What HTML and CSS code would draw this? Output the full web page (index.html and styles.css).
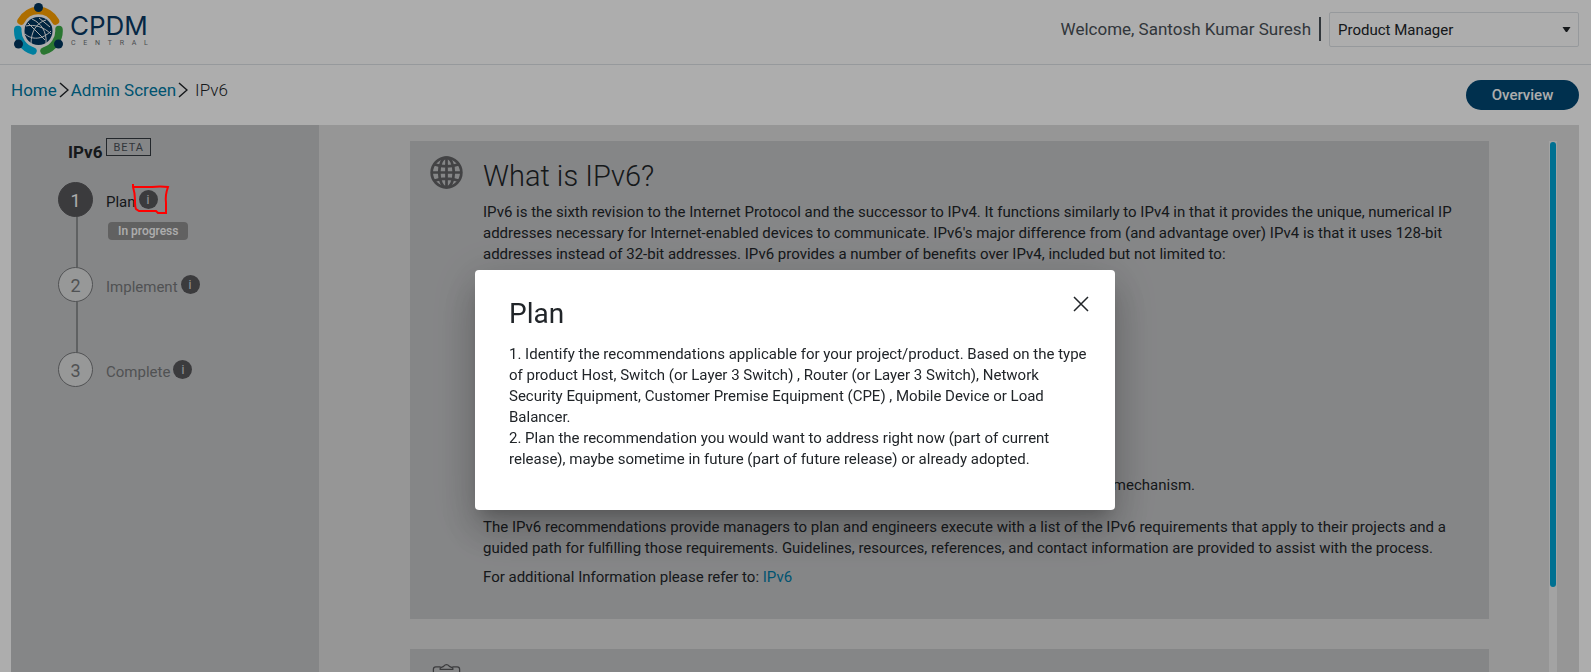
FILE: index.html
```html
<!DOCTYPE html>
<html lang="en">
<head>
<meta charset="utf-8">
<title>CPDM Central - IPv6</title>
<link rel="stylesheet" href="styles.css">
</head>
<body>
<div class="page">
  <header class="header">
    <div class="logo">
      <svg class="logo-mark" viewBox="0 0 52 54" aria-hidden="true">
        <g fill="none" stroke-width="7.500" stroke-linecap="round">
          <path d="M9 20A19.500 19.500 0 0 1 43.500 20" stroke="#ffa200"/>
          <path d="M5.800 28.500A21 21 0 0 0 21 50" stroke="#00bceb"/>
          <path d="M47 28.500A21 21 0 0 1 32 50" stroke="#3fae49"/>
        </g>
        <g fill="#00355f"><circle cx="26.500" cy="6.500" r="4.500"/><circle cx="6.500" cy="43" r="4.500"/><circle cx="46.500" cy="43" r="4.500"/><circle cx="26.500" cy="30" r="14"/></g>
        <g fill="none" stroke="#fff" stroke-width="1">
          <path d="M20 18C29 22 35 31 34 42M34 19C24 22 19 31 19 43M14 25C22 23 32 26 39 33M13 33C20 39 30 39 39 30M16 22L33 39M27 17L38 26"/>
        </g>
      </svg>
      <div class="logo-text"><span class="logo-name">CPDM</span><span class="logo-sub"><i>C</i><i>E</i><i>N</i><i>T</i><i>R</i><i>A</i><i>L</i></span></div>
    </div>
    <div class="account">
      <span class="welcome">Welcome, Santosh Kumar Suresh</span>
      <div class="select-wrap">
        <select class="role" aria-label="Role"><option>Product Manager</option></select>
        <svg class="caret" viewBox="0 0 8 5" aria-hidden="true"><path d="M0 0H8L5 4.500Q4 5.500 3 4.500Z"/></svg>
      </div>
    </div>
  </header>

  <div class="toolbar">
    <nav class="breadcrumb" aria-label="Breadcrumb">
      <a href="#">Home</a>
      <svg class="chevron" viewBox="0 0 10 16" aria-hidden="true"><path d="M1 1L9 8L1 15"/></svg>
      <a href="#">Admin Screen</a>
      <svg class="chevron" viewBox="0 0 10 16" aria-hidden="true"><path d="M1 1L9 8L1 15"/></svg>
      <span class="current">IPv6</span>
    </nav>
    <button class="overview" type="button">Overview</button>
  </div>

  <div class="workspace">
    <aside class="sidebar">
      <div class="side-title"><strong>IPv6</strong><span class="beta">BETA</span></div>
      <ol class="steps">
        <li class="step active">
          <span class="num">1</span>
          <div class="step-body">
            <div class="step-label">Plan <button class="info" type="button" aria-label="About Plan">i</button></div>
            <span class="status">In progress</span>
          </div>
        </li>
        <li class="step">
          <span class="num">2</span>
          <div class="step-body"><div class="step-label">Implement <button class="info" type="button" aria-label="About Implement">i</button></div></div>
        </li>
        <li class="step">
          <span class="num">3</span>
          <div class="step-body"><div class="step-label">Complete <button class="info" type="button" aria-label="About Complete">i</button></div></div>
        </li>
      </ol>
    </aside>
    <main class="main">
      <div class="cards">
        <section class="card">
          <svg class="card-icon" viewBox="0 0 34 34" aria-hidden="true">
            <g fill="none" stroke="#636466" stroke-width="2.800"><circle cx="17" cy="17" r="15.300"/><ellipse cx="17" cy="17" rx="7.500" ry="15.300"/><path d="M17 1V33M1 17H33M4 8.500Q17 13 30 8.500M4 25.500Q17 21 30 25.500"/></g>
          </svg>
          <div class="card-body">
            <h1>What is IPv6?</h1>
            <p>IPv6 is the sixth revision to the Internet Protocol and the successor to IPv4. It functions similarly to IPv4 in that it provides the unique, numerical IP addresses necessary for Internet-enabled devices to communicate. IPv6's major difference from (and advantage over) IPv4 is that it uses 128-bit addresses instead of 32-bit addresses. IPv6 provides a number of benefits over IPv4, included but not limited to:</p>
            <div class="benefits">mechanism.</div>
            <p>The IPv6 recommendations provide managers to plan and engineers execute with a list of the IPv6 requirements that apply to their projects and a guided path for fulfilling those requirements. Guidelines, resources, references, and contact information are provided to assist with the process.</p>
            <p>For additional Information please refer to: <a href="#">IPv6</a></p>
          </div>
        </section>
        <section class="card next">
          <svg class="card-icon" viewBox="0 0 34 34" aria-hidden="true">
            <g fill="none" stroke="#58595b" stroke-width="1.300"><path d="M11 3H6Q3.500 3 3.500 5.500V33H30.500V5.500Q30.500 3 28 3H23"/><path d="M10.500 5.500V4L14 2.500Q17 -1 20 2.500L23.500 4V5.500Z"/></g>
          </svg>
        </section>
      </div>
      <div class="track"><div class="thumb"></div></div>
    </main>
  </div>
</div>

<div class="overlay">
  <div class="dialog" role="dialog" aria-modal="true" aria-labelledby="dialog-title">
    <div class="dialog-head">
      <h2 id="dialog-title">Plan</h2>
      <button class="close" type="button" aria-label="Close"><svg viewBox="0 0 16 16" aria-hidden="true"><path d="M1 1L15 15M15 1L1 15"/></svg></button>
    </div>
    <p>1. Identify the recommendations applicable for your project/product. Based on the type of product Host, Switch (or Layer 3 Switch) , Router (or Layer 3 Switch), Network Security Equipment, Customer Premise Equipment (CPE) , Mobile Device or Load Balancer.<br>2. Plan the recommendation you would want to address right now (part of current release), maybe sometime in future (part of future release) or already adopted.</p>
  </div>
</div>
<svg class="mark" viewBox="0 0 38 32" aria-hidden="true"><path d="M1 1V4Q3 10 3 17T4 26L7 28H24L26 30H34V20Q33 12 36 4Q28 3 20 4H2"/></svg>
</body>
</html>
```
FILE: styles.css
```css
* { box-sizing: border-box; }
body {
  margin: 0;
  font-family: Roboto, "Liberation Sans", sans-serif;
  font-size: 15px;
  line-height: 21px;
  color: #212529;
  background: #fff;
}
h1, h2, p, ol { margin: 0; padding: 0; }
a { color: #007ba6; text-decoration: none; }
button { font: inherit; border: 0; padding: 0; }

.page { display: flex; flex-direction: column; height: 100vh; overflow: hidden; }

.header {
  display: flex;
  justify-content: space-between;
  flex: none;
  height: 65px;
  padding: 0 12px;
  border-bottom: 1px solid #dee2e6;
}
.logo { display: flex; }
.logo-mark { width: 52px; height: 54px; margin-top: 1px; }
.logo-text { display: flex; flex-direction: column; padding: 13px 0 0 6px; color: #0a3a66; }
.logo-name { font-family: Inter, sans-serif; font-size: 26px; line-height: 26px; }
.logo-sub { display: flex; justify-content: space-between; padding-left: 1px; font-size: 7px; line-height: 9px; color: #6c7175; }
.logo-sub i { font-style: normal; }

.account { display: flex; align-items: center; gap: 8px; padding-bottom: 6px; }
.welcome { padding-right: 8px; border-right: 2px solid #495057; font-size: 17px; line-height: 24px; color: #495057; }
.select-wrap { position: relative; display: flex; align-items: center; }
.role {
  appearance: none;
  width: 250px;
  height: 35px;
  padding: 2px 8px 0;
  border: 1px solid #dee2e6;
  border-radius: 2px;
  background: #fff;
  font: inherit;
  color: #212529;
}
.caret { position: absolute; right: 8px; width: 9px; height: 5px; fill: #212529; }

.toolbar { display: flex; justify-content: space-between; flex: none; height: 60px; padding: 15px 12px 0 11px; }
.breadcrumb { display: flex; align-items: center; gap: 2px; height: 20px; font-size: 17px; }
.chevron { width: 10px; height: 16px; fill: none; stroke: #212529; stroke-width: 1.500; }
.current { padding-left: 5px; font-weight: 300; }
.overview { width: 113px; height: 30px; border-radius: 15px; background: #004774; color: #fff; font-weight: 500; }

.workspace { display: flex; flex: 1; min-height: 0; margin: 0 12px 0 11px; background: #dedede; }
.sidebar { flex: none; width: 308px; background: #c5c6c8; }
.side-title { display: flex; gap: 4px; padding: 13px 0 0 57px; font-size: 17px; line-height: 28px; }
.beta { height: 18px; padding: 0 6px; border: 1px solid #343a40; font-size: 11px; line-height: 18px; letter-spacing: 1px; color: #495057; }
.steps { list-style: none; padding: 16px 0 0 47px; }
.step { position: relative; display: flex; gap: 13px; height: 85px; color: #77797b; }
.step:not(:last-child)::after { content: ""; position: absolute; left: 18px; top: 35px; width: 2px; height: 50px; background: #8d8f91; }
.num { display: flex; align-items: center; justify-content: center; width: 35px; height: 35px; padding-top: 2px; border: 1px solid #77797b; border-radius: 50%; background: #dfe0e1; font-size: 18px; }
.active { color: #212529; }
.active .num { border-color: #58585b; background: #58585b; color: #fff; }
.step-label { display: flex; align-items: center; gap: 3px; height: 35px; padding-top: 5px; }
.info { width: 19px; height: 19px; margin-bottom: 6px; border-radius: 50%; background: #58585b; color: #dfe0e1; font-size: 12px; line-height: 20px; }
.status { display: block; width: max-content; margin: 5px 0 0 2px; padding: 0 10px; border-radius: 4px; background: #8f8f90; color: #fff; font-size: 12px; font-weight: 500; line-height: 18px; }

.main { display: flex; flex: 1; min-width: 0; padding: 16px 22px 0 91px; }
.cards { display: flex; flex: 1; flex-direction: column; gap: 30px; min-width: 0; padding-right: 60px; overflow: hidden; }
.card { display: flex; flex: none; gap: 20px; padding: 15px 30px 23px 20px; background: #c5c6c8; }
.card-icon { flex: none; width: 33px; height: 33px; }
.card-body { flex: 1; min-width: 0; }
h1 { padding: 3px 0 9px; font-size: 29px; font-weight: 300; line-height: 34px; }
.card-body p { margin-bottom: 8px; }
.benefits { display: flex; align-items: flex-end; justify-content: flex-end; height: 223px; margin-bottom: 21px; padding-right: 264px; }
.next { min-height: 200px; }
.track { width: 8px; padding: 1px 1px 0; background: #f1f1f1; }
.thumb { height: 445px; border-radius: 3px; background: #00a5d6; }

.overlay {
  position: fixed;
  inset: 0;
  display: flex;
  align-items: center;
  justify-content: center;
  padding: 108px 1px 0 0;
  background: rgba(0, 0, 0, 0.32);
}
.dialog {
  width: 640px;
  min-height: 240px;
  padding: 24px;
  border-radius: 4px;
  background: #fff;
  box-shadow: 0 11px 15px -7px rgba(0, 0, 0, .2), 0 24px 38px 3px rgba(0, 0, 0, .14), 0 9px 46px 8px rgba(0, 0, 0, .12);
}
.dialog-head { display: flex; justify-content: space-between; }
h2 { padding: 3px 10px 2px; font-size: 28px; font-weight: 400; line-height: 34px; }
.close { height: 20px; margin: 2px 2px 0 0; background: none; cursor: pointer; }
.close svg { width: 16px; height: 16px; fill: none; stroke: #212529; stroke-width: 1.500; }
.dialog p { padding: 11px 0 11px 10px; }
.mark { position: absolute; left: 132px; top: 183px; width: 38px; height: 32px; fill: none; stroke: #f00; stroke-width: 2; pointer-events: none; }
```
